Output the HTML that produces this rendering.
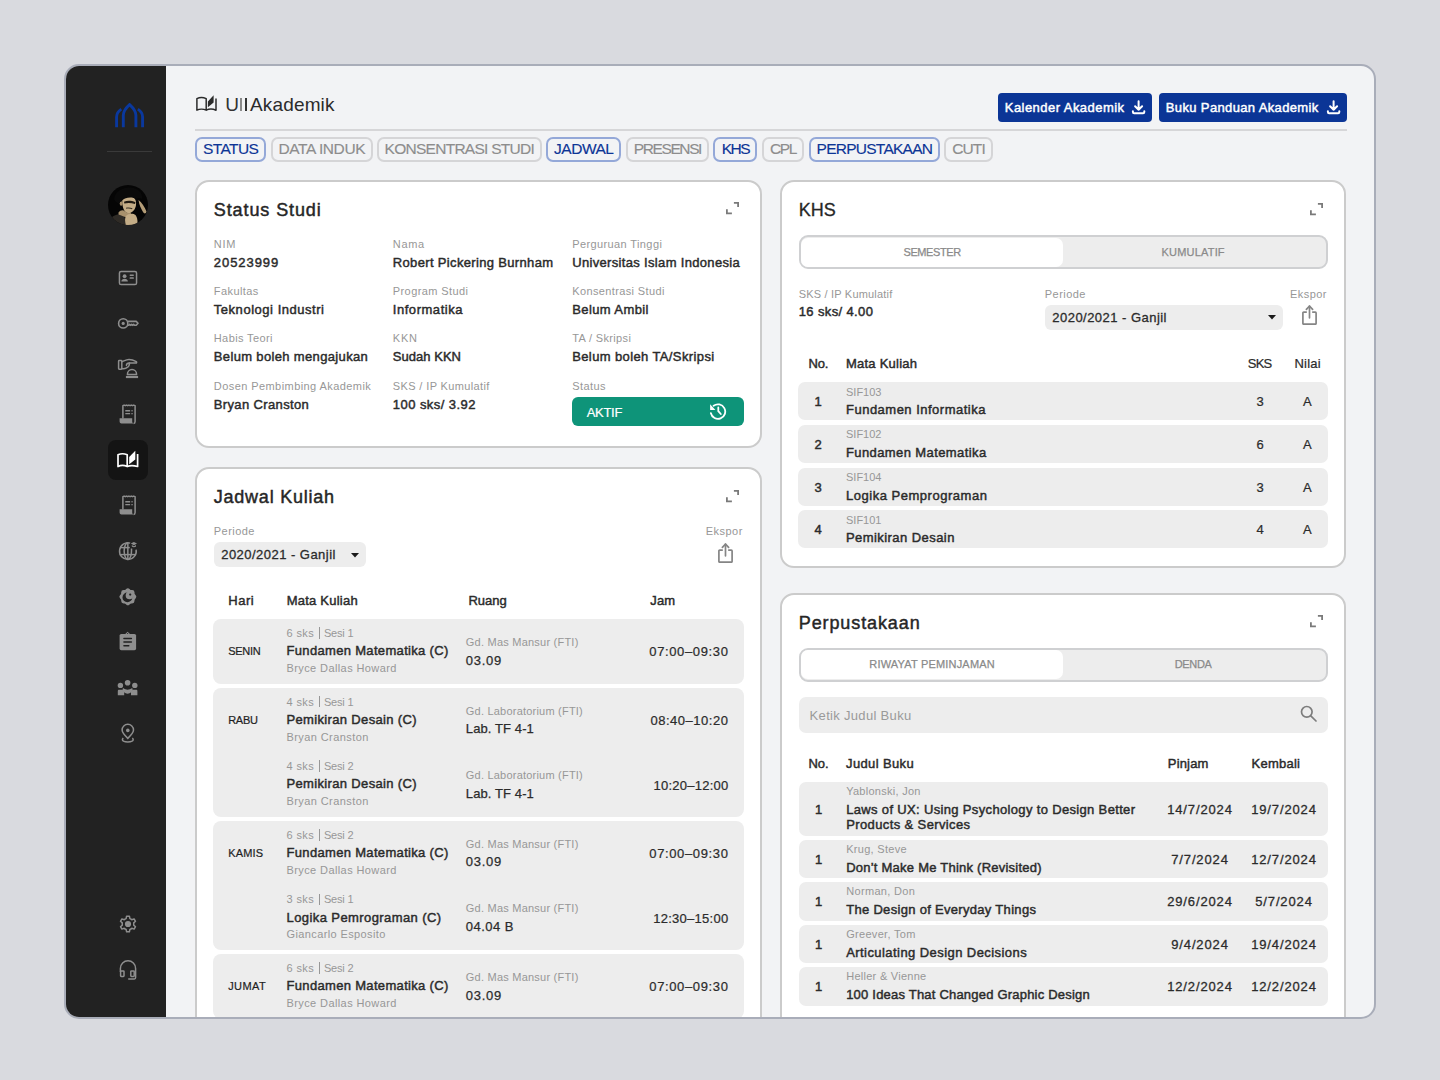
<!DOCTYPE html>
<html><head><meta charset="utf-8"><style>
html,body{margin:0;padding:0;width:1440px;height:1080px;overflow:hidden;background:#d9dadf;}
body{position:relative;font-family:"Liberation Sans", sans-serif;}
.t{position:absolute;white-space:nowrap;}
</style></head><body>
<div style="position:absolute;left:64px;top:64px;width:1308px;height:951px;border:2px solid #a9adb9;border-radius:15px;overflow:hidden;background:#f2f3f5;"><div style="position:absolute;left:0;top:0;width:100px;height:100%;background:#222222;"></div><div id="main" style="position:absolute;left:-66px;top:-66px;width:1440px;height:1080px;">
<svg style="position:absolute;left:115px;top:103.2px;" width="30" height="25" viewBox="0 0 30 25"><g fill="none" stroke="#0a389e" stroke-width="2.9" stroke-linejoin="miter"><path d="M8.3 24.3 V12.3 C8.3 7.5 11.5 4.5 14.6 1.7 C17.7 4.5 20.9 7.5 20.9 12.3 V24.3"/><path d="M1.6 24.3 V14 C1.6 10.5 3.4 8 6.3 6.1"/><path d="M27.6 24.3 V14 C27.6 10.5 25.8 8 22.9 6.1"/></g></svg>
<div style="position:absolute;left:107px;top:150.5px;width:45px;height:1.5px;background:#3a3a3a;"></div>
<svg style="position:absolute;left:108px;top:184.8px;" width="40" height="40" viewBox="0 0 40 40"><defs><clipPath id="av"><circle cx="20" cy="20" r="20"/></clipPath></defs><g clip-path="url(#av)"><rect width="40" height="40" fill="#050505"/><path d="M3 33 C7 29 12 28.5 15 30 C17 32 18 36 18 41 L3 41Z" fill="#2f2b26"/><path d="M10.5 27.5 C12.5 25 15 24.5 17 26.5 C19 28 21 28.5 23 27.5 L22.5 33 C18.5 32.5 14 31 10.5 29.5Z" fill="#a8916d"/><path d="M18 31 C20 28.5 25 28 27.5 30 C29.5 32.5 30 37 29 41 L18 41 C17 36.5 16.5 33.5 18 31Z" fill="#c4ad87"/><path d="M14.5 14 C16 11.5 20 11 24 12 C27.5 13 28.5 16.5 28 20 C27.5 24 25 27.5 21.5 28 C18 28.5 15.5 25.5 14.8 21.5 C14.3 18.5 14 16 14.5 14Z" fill="#c4ad87"/><ellipse cx="13.2" cy="18.5" rx="1.5" ry="2.2" fill="#a38c69"/><path d="M6 14 C7 6 15 2 23 2.5 C30 3 35 8 34 14 C32 13 30 12.5 28.5 14 C26 12.5 21 12 17 13.5 C14.5 14.5 12.5 16.5 11 18.5 C9 18 7 16.5 6 14Z" fill="#0a0a0a"/><path d="M16 16.8 C19 15.5 23 15.5 27.5 17.2 L27 19 C23 17.8 19.5 17.8 16.3 18.6Z" fill="#211b13"/><path d="M18 22.8 C20 22.2 22.5 22.3 24.5 23.2 L24 24.2 C22 23.4 20 23.4 18.2 23.8Z" fill="#3a3125"/><path d="M30.5 15 C33.5 17 36.5 21.5 38.5 26.5 C38 29 36 29 35 27 C33 23.5 31 19.5 30.5 15Z" fill="#b39c77"/></g></svg>
<svg style="position:absolute;left:118px;top:269.5px;" width="20" height="16" viewBox="0 0 20 16"><rect x="1.45" y="1.45" width="17.1" height="13.1" rx="1.6" fill="none" stroke="#8e8e8e" stroke-width="1.5"/><g fill="#8e8e8e"><circle cx="6.6" cy="6.2" r="1.9"/><path d="M3.3 11.6 C3.5 9.6 4.8 8.8 6.6 8.8 C8.4 8.8 9.7 9.6 9.9 11.6Z"/><rect x="11.6" y="4.4" width="4.3" height="1.5" rx="0.6"/><rect x="11.6" y="7.3" width="4.3" height="1.5" rx="0.6"/></g></svg>
<svg style="position:absolute;left:117px;top:317px;" width="22" height="13" viewBox="0 0 22 13"><g fill="none" stroke="#8e8e8e" stroke-width="1.6" stroke-linejoin="round"><circle cx="6.2" cy="6.4" r="4.6"/><path d="M10.6 4.4 H19.2 L21 6.3 L19.2 8.3 H17.6 L16.6 7.3 L15.6 8.3 L14.6 7.3 L13.6 8.3 L12.6 7.3 L11.6 8.3 H10.6"/></g><circle cx="6.2" cy="6.4" r="1.6" fill="#8e8e8e"/></svg>
<svg style="position:absolute;left:117px;top:358px;" width="22" height="22" viewBox="0 0 22 22"><g fill="none" stroke="#8e8e8e" stroke-width="1.5" stroke-linejoin="round" stroke-linecap="round"><rect x="1.6" y="2.6" width="3.2" height="8.6" rx="0.6"/><path d="M4.8 3.8 C6.8 3.2 9 1.4 12 1.4 C14.5 1.4 17.5 2.6 19.3 3.6 C19.9 4 19.7 5.1 18.9 5.1 H12.2 C10.6 5.1 9.5 6 9.4 7.4"/><path d="M12.4 5.1 C12.6 7.4 11.4 9 9.6 9.8 C7.6 10.8 6.2 10.9 4.8 10.5"/><path d="M10.4 16.4 C10.4 13.6 12.4 11.6 15 11.6 C17.6 11.6 19.6 13.6 19.6 16.4Z"/></g><rect x="8.9" y="17.9" width="12.2" height="2.2" fill="#8e8e8e"/></svg>
<svg style="position:absolute;left:118px;top:404.2px;" width="20" height="21" viewBox="0 0 20 21"><g fill="none" stroke="#8e8e8e" stroke-width="1.5" stroke-linejoin="round"><path d="M4.9 14.6 V1.6 L6.1 1.1 L7.3 1.7 L8.5 1.1 L9.7 1.7 L10.9 1.1 L12.1 1.7 L13.3 1.1 L14.5 1.7 L15.7 1.1 L17.1 1.6 V17.6 C17.1 18.7 16.6 19.4 15.6 19.4"/></g><g fill="#8e8e8e"><path d="M1.6 14.2 H14.2 V17.5 C14.2 18.5 14.9 19.5 16 19.5 H3.5 C2.4 19.5 1.6 18.6 1.6 17.5Z"/><rect x="7.2" y="6.1" width="5" height="1.3" rx="0.5"/><rect x="7.2" y="9" width="5" height="1.3" rx="0.5"/><rect x="13.4" y="6.1" width="1.3" height="1.3"/><rect x="13.4" y="9" width="1.3" height="1.3"/></g></svg>
<div style="position:absolute;left:108px;top:440px;width:40px;height:40px;background:#141414;border-radius:8px;"></div>
<svg style="position:absolute;left:117px;top:450px;" width="22" height="18" viewBox="0 0 22 18"><g fill="none" stroke="#ffffff" stroke-width="1.7" stroke-linejoin="round"><path d="M1 16.5 V4.8 C3.5 3.6 7.5 3.6 10.2 4.8 V16.5 C7.5 15.3 3.5 15.3 1 16.5Z"/><path d="M10.2 16.5 C12.9 15.3 16.9 15.3 20.6 16.5 V4"/></g><path d="M12.2 7 L18.3 0.8 V9.6 L12.2 14.2Z" fill="#ffffff"/></svg>
<svg style="position:absolute;left:118px;top:494.5px;" width="20" height="21" viewBox="0 0 20 21"><g fill="none" stroke="#8e8e8e" stroke-width="1.5" stroke-linejoin="round"><path d="M4.9 14.6 V1.6 L6.1 1.1 L7.3 1.7 L8.5 1.1 L9.7 1.7 L10.9 1.1 L12.1 1.7 L13.3 1.1 L14.5 1.7 L15.7 1.1 L17.1 1.6 V17.6 C17.1 18.7 16.6 19.4 15.6 19.4"/></g><g fill="#8e8e8e"><path d="M1.6 14.2 H14.2 V17.5 C14.2 18.5 14.9 19.5 16 19.5 H3.5 C2.4 19.5 1.6 18.6 1.6 17.5Z"/><rect x="7.2" y="6.1" width="5" height="1.3" rx="0.5"/><rect x="7.2" y="9" width="5" height="1.3" rx="0.5"/><rect x="13.4" y="6.1" width="1.3" height="1.3"/><rect x="13.4" y="9" width="1.3" height="1.3"/></g></svg>
<svg style="position:absolute;left:118px;top:541px;" width="20" height="20" viewBox="0 0 20 20"><g fill="none" stroke="#8e8e8e" stroke-width="1.5"><path d="M12.2 2.1 A8.35 8.35 0 1 0 18.1 8.6"/><path d="M9.85 1.75 A3.7 8.35 0 0 0 9.85 18.45 A3.7 8.35 0 0 0 13.5 9.5 V7.5"/><path d="M9.85 1.75 V18.45"/><path d="M2.1 6.6 H11.8"/><path d="M1.6 13.6 H18.1"/></g><g fill="#8e8e8e"><path d="M12.8 2.6 L15.9 0.9 L19 2.6 L15.9 4.3Z"/><path d="M13.8 4.1 V5.5 C14.8 6.4 17 6.4 18 5.5 V4.1 L15.9 5.3Z"/></g></svg>
<svg style="position:absolute;left:118px;top:587px;" width="20" height="20" viewBox="0 0 20 20"><g fill="#8e8e8e"><rect x="3.2" y="3.1" width="13.3" height="13.3" rx="2.4"/><rect x="3.2" y="3.1" width="13.3" height="13.3" rx="2.4" transform="rotate(45 9.85 9.75)"/></g><circle cx="9.4" cy="10.4" r="4.9" fill="#222"/><circle cx="11.5" cy="8.4" r="3.8" fill="#8e8e8e"/><circle cx="12.2" cy="7.6" r="1.1" fill="#222"/></svg>
<svg style="position:absolute;left:119px;top:631px;" width="18" height="20" viewBox="0 0 18 20"><g fill="#8e8e8e"><rect x="0.6" y="2.9" width="16.5" height="16.3" rx="1.7"/><path d="M6 3.2 L8.6 0.8 L11.2 3.2Z"/></g><g fill="#222"><circle cx="8.6" cy="2.5" r="0.6"/><rect x="4.2" y="6.8" width="8.9" height="1.5" rx="0.75"/><rect x="4.2" y="10.3" width="8.9" height="1.5" rx="0.75"/><rect x="4.2" y="14" width="6.3" height="1.5" rx="0.75"/></g></svg>
<svg style="position:absolute;left:117px;top:679px;" width="22" height="18" viewBox="0 0 22 18"><g fill="#8e8e8e"><circle cx="3.4" cy="6.4" r="2.7"/><circle cx="10.6" cy="3.7" r="2.8"/><circle cx="17.8" cy="6.4" r="2.7"/><path d="M0.8 16.2 V12 C0.8 11.3 1.3 10.8 2 10.8 H5.4 L7.2 12.6 V16.2Z"/><path d="M20.4 16.2 V12 C20.4 11.3 19.9 10.8 19.2 10.8 H15.8 L14 12.6 V16.2Z"/><path d="M6 9.1 C7.8 10.4 9.2 10.8 10.6 10.8 C12 10.8 13.4 10.4 15.2 9.1 L15.9 11.5 C13.9 13.9 12.1 14.7 10.6 14.7 C9.1 14.7 7.3 13.9 5.3 11.5Z"/></g></svg>
<svg style="position:absolute;left:118px;top:722px;" width="20" height="22" viewBox="0 0 20 22"><g fill="none" stroke="#8e8e8e" stroke-width="1.5"><path d="M9.8 16.4 C6 12.6 4.1 10.5 4.1 8 A5.7 5.7 0 0 1 15.5 8 C15.5 10.5 13.6 12.6 9.8 16.4Z"/><path d="M5.3 16.2 C4.6 16.7 4.4 17.2 4.4 17.6 C4.4 19.1 7 20 9.8 20 C12.6 20 15.2 19.1 15.2 17.6 C15.2 17.2 15 16.7 14.3 16.2"/></g><circle cx="9.8" cy="8.4" r="1.8" fill="#8e8e8e"/></svg>
<svg style="position:absolute;left:117.8px;top:915.3px;" width="20" height="18" viewBox="0 0 20 18"><g fill="none" stroke="#8e8e8e" stroke-width="1.5" stroke-linejoin="round"><path d="M8.6 1.2 H11.4 L11.9 3.6 C12.6 3.9 13.2 4.2 13.8 4.7 L16.1 3.9 L17.5 6.3 L15.7 7.9 C15.8 8.6 15.8 9.4 15.7 10.1 L17.5 11.7 L16.1 14.1 L13.8 13.3 C13.2 13.8 12.6 14.1 11.9 14.4 L11.4 16.8 H8.6 L8.1 14.4 C7.4 14.1 6.8 13.8 6.2 13.3 L3.9 14.1 L2.5 11.7 L4.3 10.1 C4.2 9.4 4.2 8.6 4.3 7.9 L2.5 6.3 L3.9 3.9 L6.2 4.7 C6.8 4.2 7.4 3.9 8.1 3.6Z"/></g><circle cx="10" cy="9" r="3.1" fill="#8e8e8e"/></svg>
<svg style="position:absolute;left:118px;top:959px;" width="20" height="22" viewBox="0 0 20 22"><g fill="none" stroke="#8e8e8e" stroke-width="1.5" stroke-linejoin="round"><path d="M2.4 13 V9.4 A7.6 7.6 0 0 1 17.6 9.4 V18.6 C17.6 19.4 17.2 19.9 16.4 19.9 H10.2"/><rect x="2.6" y="11.9" width="3.4" height="5.6" rx="0.7"/><rect x="12.8" y="11.9" width="3.4" height="5.6" rx="0.7"/></g></svg>
<svg style="position:absolute;left:195.5px;top:93.5px;" width="21" height="18" viewBox="0 0 21 18"><g fill="none" stroke="#2b2b2b" stroke-width="1.5" stroke-linejoin="round"><path d="M0.9 16.2 V4.6 C3.3 3.3 7.6 3.3 10.2 4.6 V16.2 C7.6 14.8 3.3 14.8 0.9 16.2Z"/><path d="M10.2 16.2 C12.8 14.8 17.1 14.8 20 16.2 V4.5"/></g><path d="M11.9 7.4 L17.6 1.2 V8.6 L11.9 13.3Z" fill="#2b2b2b"/></svg>
<div class="t" style="left:225.2px;top:95.22px;font-size:19px;line-height:19px;font-weight:400;color:#333;">U</div>
<div style="position:absolute;left:240.1px;top:97.6px;width:1.6px;height:13.7px;background:#8a8a8a"></div>
<div style="position:absolute;left:244.9px;top:97.6px;width:1.7px;height:13.7px;background:#333"></div>
<div class="t" style="left:250px;top:95.22px;font-size:19px;line-height:19px;font-weight:400;color:#2b2b2b;letter-spacing:0.154px;">Akademik</div>
<div style="position:absolute;left:998px;top:93px;width:154px;height:29px;background:#0b3596;border-radius:4px;"></div>
<div class="t" style="left:1004.8px;top:101.20px;font-size:13px;line-height:13px;font-weight:400;-webkit-text-stroke:0.45px #fff;color:#fff;letter-spacing:0.449px;">Kalender Akademik</div>
<svg style="position:absolute;left:1131.1px;top:100.4px;" width="15" height="15" viewBox="0 0 15 15"><g fill="none" stroke="#fff" stroke-width="2" stroke-linecap="round" stroke-linejoin="round"><path d="M7.6 1.2 V9.8 M4.1 6.3 L7.6 9.8 L11.1 6.3"/><path d="M1.9 11.3 V12 Q1.9 13.2 3.1 13.2 H12.1 Q13.3 13.2 13.3 12 V11.3"/></g></svg>
<div style="position:absolute;left:1159px;top:93px;width:188px;height:29px;background:#0b3596;border-radius:4px;"></div>
<div class="t" style="left:1165.8px;top:101.20px;font-size:13px;line-height:13px;font-weight:400;-webkit-text-stroke:0.45px #fff;color:#fff;letter-spacing:0.361px;">Buku Panduan Akademik</div>
<svg style="position:absolute;left:1326.4px;top:100.4px;" width="15" height="15" viewBox="0 0 15 15"><g fill="none" stroke="#fff" stroke-width="2" stroke-linecap="round" stroke-linejoin="round"><path d="M7.6 1.2 V9.8 M4.1 6.3 L7.6 9.8 L11.1 6.3"/><path d="M1.9 11.3 V12 Q1.9 13.2 3.1 13.2 H12.1 Q13.3 13.2 13.3 12 V11.3"/></g></svg>
<div style="position:absolute;left:195px;top:129px;width:1152px;height:1.5px;background:#d6d6d8;"></div>
<div style="position:absolute;left:195.2px;top:137px;width:66.6px;height:20.8px;border:2px solid #94a8d8;border-radius:7px;"></div>
<div class="t" style="left:230.65px;transform:translateX(-50%);top:141.18px;font-size:15.5px;line-height:15.5px;font-weight:400;-webkit-text-stroke:0.15px #0d3596;color:#0d3596;letter-spacing:-0.612px;">STATUS</div>
<div style="position:absolute;left:270.7px;top:137px;width:97.9px;height:20.8px;border:2px solid #d5d5d7;border-radius:7px;"></div>
<div class="t" style="left:321.8px;transform:translateX(-50%);top:141.18px;font-size:15.5px;line-height:15.5px;font-weight:400;-webkit-text-stroke:0.15px #8d8d8d;color:#8d8d8d;letter-spacing:-0.402px;">DATA INDUK</div>
<div style="position:absolute;left:376.7px;top:137px;width:161.0px;height:20.8px;border:2px solid #d5d5d7;border-radius:7px;"></div>
<div class="t" style="left:459.35px;transform:translateX(-50%);top:141.18px;font-size:15.5px;line-height:15.5px;font-weight:400;-webkit-text-stroke:0.15px #8d8d8d;color:#8d8d8d;letter-spacing:-0.733px;">KONSENTRASI STUDI</div>
<div style="position:absolute;left:546.3px;top:137px;width:70.7px;height:20.8px;border:2px solid #94a8d8;border-radius:7px;"></div>
<div class="t" style="left:583.8px;transform:translateX(-50%);top:141.18px;font-size:15.5px;line-height:15.5px;font-weight:400;-webkit-text-stroke:0.15px #0d3596;color:#0d3596;letter-spacing:-0.479px;">JADWAL</div>
<div style="position:absolute;left:625.5px;top:137px;width:79.5px;height:20.8px;border:2px solid #d5d5d7;border-radius:7px;"></div>
<div class="t" style="left:667.4px;transform:translateX(-50%);top:141.18px;font-size:15.5px;line-height:15.5px;font-weight:400;-webkit-text-stroke:0.15px #8d8d8d;color:#8d8d8d;letter-spacing:-1.384px;">PRESENSI</div>
<div style="position:absolute;left:713.4px;top:137px;width:39.6px;height:20.8px;border:2px solid #94a8d8;border-radius:7px;"></div>
<div class="t" style="left:735.35px;transform:translateX(-50%);top:141.18px;font-size:15.5px;line-height:15.5px;font-weight:400;-webkit-text-stroke:0.15px #0d3596;color:#0d3596;letter-spacing:-1.538px;">KHS</div>
<div style="position:absolute;left:761.7px;top:137px;width:38.3px;height:20.8px;border:2px solid #d5d5d7;border-radius:7px;"></div>
<div class="t" style="left:783.0px;transform:translateX(-50%);top:141.18px;font-size:15.5px;line-height:15.5px;font-weight:400;-webkit-text-stroke:0.15px #8d8d8d;color:#8d8d8d;letter-spacing:-1.328px;">CPL</div>
<div style="position:absolute;left:808.7px;top:137px;width:127.1px;height:20.8px;border:2px solid #94a8d8;border-radius:7px;"></div>
<div class="t" style="left:874.4px;transform:translateX(-50%);top:141.18px;font-size:15.5px;line-height:15.5px;font-weight:400;-webkit-text-stroke:0.15px #0d3596;color:#0d3596;letter-spacing:-0.755px;">PERPUSTAKAAN</div>
<div style="position:absolute;left:944.2px;top:137px;width:44.4px;height:20.8px;border:2px solid #d5d5d7;border-radius:7px;"></div>
<div class="t" style="left:968.55px;transform:translateX(-50%);top:141.18px;font-size:15.5px;line-height:15.5px;font-weight:400;-webkit-text-stroke:0.15px #8d8d8d;color:#8d8d8d;letter-spacing:-0.857px;">CUTI</div>
<div style="position:absolute;left:195px;top:180px;width:563px;height:264px;border:2px solid #cbcbcb;border-radius:14px;background:#ffffff;"></div>
<div class="t" style="left:213.8px;top:201.06px;font-size:18px;line-height:18px;font-weight:400;-webkit-text-stroke:0.45px #262626;color:#262626;letter-spacing:0.903px;">Status Studi</div>
<svg style="position:absolute;left:726px;top:202px;" width="13" height="13" viewBox="0 0 13 13"><g fill="none" stroke="#7a7a7a" stroke-width="1.8"><path d="M7.9 0.9 H12.1 V5.1"/><path d="M0.9 7.2 V11.4 H5.9"/></g></svg>
<div class="t" style="left:213.8px;top:238.59px;font-size:11px;line-height:11px;font-weight:400;color:#979797;letter-spacing:0.706px;">NIM</div>
<div class="t" style="left:213.8px;top:255.80px;font-size:13px;line-height:13px;font-weight:400;-webkit-text-stroke:0.45px #2b2b2b;color:#2b2b2b;letter-spacing:0.937px;">20523999</div>
<div class="t" style="left:392.8px;top:238.59px;font-size:11px;line-height:11px;font-weight:400;color:#979797;letter-spacing:0.685px;">Nama</div>
<div class="t" style="left:392.8px;top:255.80px;font-size:13px;line-height:13px;font-weight:400;-webkit-text-stroke:0.45px #2b2b2b;color:#2b2b2b;letter-spacing:0.340px;">Robert Pickering Burnham</div>
<div class="t" style="left:572.2px;top:238.59px;font-size:11px;line-height:11px;font-weight:400;color:#979797;letter-spacing:0.391px;">Perguruan Tinggi</div>
<div class="t" style="left:572.2px;top:255.80px;font-size:13px;line-height:13px;font-weight:400;-webkit-text-stroke:0.45px #2b2b2b;color:#2b2b2b;letter-spacing:0.332px;">Universitas Islam Indonesia</div>
<div class="t" style="left:213.8px;top:285.89px;font-size:11px;line-height:11px;font-weight:400;color:#979797;letter-spacing:0.416px;">Fakultas</div>
<div class="t" style="left:213.8px;top:302.90px;font-size:13px;line-height:13px;font-weight:400;-webkit-text-stroke:0.45px #2b2b2b;color:#2b2b2b;letter-spacing:0.531px;">Teknologi Industri</div>
<div class="t" style="left:392.8px;top:285.89px;font-size:11px;line-height:11px;font-weight:400;color:#979797;letter-spacing:0.410px;">Program Studi</div>
<div class="t" style="left:392.8px;top:302.90px;font-size:13px;line-height:13px;font-weight:400;-webkit-text-stroke:0.45px #2b2b2b;color:#2b2b2b;letter-spacing:0.539px;">Informatika</div>
<div class="t" style="left:572.2px;top:285.89px;font-size:11px;line-height:11px;font-weight:400;color:#979797;letter-spacing:0.377px;">Konsentrasi Studi</div>
<div class="t" style="left:572.2px;top:302.90px;font-size:13px;line-height:13px;font-weight:400;-webkit-text-stroke:0.45px #2b2b2b;color:#2b2b2b;letter-spacing:0.405px;">Belum Ambil</div>
<div class="t" style="left:213.8px;top:333.44px;font-size:11px;line-height:11px;font-weight:400;color:#979797;letter-spacing:0.384px;">Habis Teori</div>
<div class="t" style="left:213.8px;top:350.30px;font-size:13px;line-height:13px;font-weight:400;-webkit-text-stroke:0.45px #2b2b2b;color:#2b2b2b;letter-spacing:0.347px;">Belum boleh mengajukan</div>
<div class="t" style="left:392.8px;top:333.44px;font-size:11px;line-height:11px;font-weight:400;color:#979797;letter-spacing:0.792px;">KKN</div>
<div class="t" style="left:392.8px;top:350.30px;font-size:13px;line-height:13px;font-weight:400;-webkit-text-stroke:0.45px #2b2b2b;color:#2b2b2b;letter-spacing:0.033px;">Sudah KKN</div>
<div class="t" style="left:572.2px;top:333.44px;font-size:11px;line-height:11px;font-weight:400;color:#979797;letter-spacing:0.349px;">TA / Skripsi</div>
<div class="t" style="left:572.2px;top:350.30px;font-size:13px;line-height:13px;font-weight:400;-webkit-text-stroke:0.45px #2b2b2b;color:#2b2b2b;letter-spacing:0.385px;">Belum boleh TA/Skripsi</div>
<div class="t" style="left:213.8px;top:380.99px;font-size:11px;line-height:11px;font-weight:400;color:#979797;letter-spacing:0.428px;">Dosen Pembimbing Akademik</div>
<div class="t" style="left:213.8px;top:397.60px;font-size:13px;line-height:13px;font-weight:400;-webkit-text-stroke:0.45px #2b2b2b;color:#2b2b2b;letter-spacing:0.359px;">Bryan Cranston</div>
<div class="t" style="left:392.8px;top:380.99px;font-size:11px;line-height:11px;font-weight:400;color:#979797;letter-spacing:0.372px;">SKS / IP Kumulatif</div>
<div class="t" style="left:392.8px;top:397.60px;font-size:13px;line-height:13px;font-weight:400;-webkit-text-stroke:0.45px #2b2b2b;color:#2b2b2b;letter-spacing:0.448px;">100 sks/ 3.92</div>
<div class="t" style="left:572.2px;top:380.99px;font-size:11px;line-height:11px;font-weight:400;color:#979797;letter-spacing:0.437px;">Status</div>
<div style="position:absolute;left:572px;top:397px;width:171.5px;height:28.7px;background:#0e9479;border-radius:6px;"></div>
<div class="t" style="left:586.7px;top:405.70px;font-size:13px;line-height:13px;font-weight:400;-webkit-text-stroke:0.2px #ffffff;color:#ffffff;letter-spacing:-0.286px;">AKTIF</div>
<svg style="position:absolute;left:709px;top:403px;" width="18" height="18" viewBox="0 0 18 18"><g fill="none" stroke="#fff" stroke-width="1.8" stroke-linecap="round"><path d="M4.6 2.8 A7.25 7.25 0 1 1 1.9 10.2"/><path d="M9.3 4.4 V8.1 L11.8 11"/></g><path d="M1.1 1.3 V6.9 H6.4Z" fill="#fff"/></svg>
<div style="position:absolute;left:195px;top:467px;width:563px;height:629px;border:2px solid #cbcbcb;border-radius:14px;background:#ffffff;"></div>
<div class="t" style="left:213.8px;top:487.66px;font-size:18px;line-height:18px;font-weight:400;-webkit-text-stroke:0.45px #262626;color:#262626;letter-spacing:0.760px;">Jadwal Kuliah</div>
<svg style="position:absolute;left:726px;top:489.8px;" width="13" height="13" viewBox="0 0 13 13"><g fill="none" stroke="#7a7a7a" stroke-width="1.8"><path d="M7.9 0.9 H12.1 V5.1"/><path d="M0.9 7.2 V11.4 H5.9"/></g></svg>
<div class="t" style="left:213.8px;top:525.79px;font-size:11px;line-height:11px;font-weight:400;color:#979797;letter-spacing:0.442px;">Periode</div>
<div style="position:absolute;left:213.6px;top:542px;width:152px;height:24.7px;background:#ededed;border-radius:6px;"></div>
<div class="t" style="left:221.2px;top:548.30px;font-size:13px;line-height:13px;font-weight:400;-webkit-text-stroke:0.3px #2b2b2b;color:#2b2b2b;letter-spacing:0.468px;">2020/2021 - Ganjil</div>
<svg style="position:absolute;left:350.8px;top:552.5px;" width="8" height="5" viewBox="0 0 8 5"><path d="M0 0 H8 L4 4.6Z" fill="#1a1a1a"/></svg>
<div class="t" style="right:697.2px;top:525.79px;font-size:11px;line-height:11px;font-weight:400;color:#979797;letter-spacing:0.480px;">Ekspor</div>
<svg style="position:absolute;left:717.5px;top:543px;" width="15" height="20" viewBox="0 0 15 20"><g fill="none" stroke="#858585" stroke-width="1.7" stroke-linejoin="round" stroke-linecap="round"><path d="M7.5 1.2 V12.8"/><path d="M4.4 4.3 L7.5 1.2 L10.6 4.3"/><path d="M4.2 7.1 H1.7 Q0.9 7.1 0.9 7.9 V18.4 Q0.9 19.2 1.7 19.2 H13.3 Q14.1 19.2 14.1 18.4 V7.9 Q14.1 7.1 13.3 7.1 H10.8"/></g></svg>
<div class="t" style="left:228.3px;top:593.60px;font-size:13px;line-height:13px;font-weight:400;-webkit-text-stroke:0.45px #2b2b2b;color:#2b2b2b;letter-spacing:0.484px;">Hari</div>
<div class="t" style="left:286.7px;top:593.60px;font-size:13px;line-height:13px;font-weight:400;-webkit-text-stroke:0.45px #2b2b2b;color:#2b2b2b;letter-spacing:0.234px;">Mata Kuliah</div>
<div class="t" style="left:468.4px;top:593.60px;font-size:13px;line-height:13px;font-weight:400;-webkit-text-stroke:0.45px #2b2b2b;color:#2b2b2b;letter-spacing:-0.003px;">Ruang</div>
<div class="t" style="left:650.2px;top:593.60px;font-size:13px;line-height:13px;font-weight:400;-webkit-text-stroke:0.45px #2b2b2b;color:#2b2b2b;letter-spacing:0.219px;">Jam</div>
<div style="position:absolute;left:213.3px;top:619.1px;width:530.4px;height:64.45px;background:#ededed;border-radius:8px;"></div>
<div class="t" style="left:228.2px;top:646.01px;font-size:11px;line-height:11px;font-weight:400;-webkit-text-stroke:0.2px #1f1f1f;color:#1f1f1f;letter-spacing:-0.281px;">SENIN</div>
<div class="t" style="left:286.5px;top:628.09px;font-size:11px;line-height:11px;font-weight:400;color:#979797;letter-spacing:0.378px;">6 sks</div>
<div style="position:absolute;left:318.6px;top:627.1px;width:1.2px;height:11.6px;background:#979797;"></div>
<div class="t" style="left:323.9px;top:628.09px;font-size:11px;line-height:11px;font-weight:400;color:#979797;letter-spacing:-0.176px;">Sesi 1</div>
<div class="t" style="left:286.5px;top:644.10px;font-size:13px;line-height:13px;font-weight:400;-webkit-text-stroke:0.45px #2b2b2b;color:#2b2b2b;letter-spacing:0.327px;">Fundamen Matematika (C)</div>
<div class="t" style="left:286.5px;top:662.99px;font-size:11px;line-height:11px;font-weight:400;color:#979797;letter-spacing:0.399px;">Bryce Dallas Howard</div>
<div class="t" style="left:465.8px;top:636.89px;font-size:11px;line-height:11px;font-weight:400;color:#979797;letter-spacing:0.228px;">Gd. Mas Mansur (FTI)</div>
<div class="t" style="left:465.8px;top:653.50px;font-size:13px;line-height:13px;font-weight:400;-webkit-text-stroke:0.25px #2b2b2b;color:#2b2b2b;letter-spacing:0.738px;">03.09</div>
<div class="t" style="right:711.5px;top:645.30px;font-size:13px;line-height:13px;font-weight:400;-webkit-text-stroke:0.22px #2b2b2b;color:#2b2b2b;letter-spacing:0.630px;">07:00–09:30</div>
<div style="position:absolute;left:213.3px;top:687.85px;width:530.4px;height:128.9px;background:#ededed;border-radius:8px;"></div>
<div class="t" style="left:228.2px;top:714.76px;font-size:11px;line-height:11px;font-weight:400;-webkit-text-stroke:0.2px #1f1f1f;color:#1f1f1f;letter-spacing:-0.288px;">RABU</div>
<div class="t" style="left:286.5px;top:696.84px;font-size:11px;line-height:11px;font-weight:400;color:#979797;letter-spacing:0.378px;">4 sks</div>
<div style="position:absolute;left:318.6px;top:695.85px;width:1.2px;height:11.6px;background:#979797;"></div>
<div class="t" style="left:323.9px;top:696.84px;font-size:11px;line-height:11px;font-weight:400;color:#979797;letter-spacing:-0.176px;">Sesi 1</div>
<div class="t" style="left:286.5px;top:712.85px;font-size:13px;line-height:13px;font-weight:400;-webkit-text-stroke:0.45px #2b2b2b;color:#2b2b2b;letter-spacing:0.342px;">Pemikiran Desain (C)</div>
<div class="t" style="left:286.5px;top:731.74px;font-size:11px;line-height:11px;font-weight:400;color:#979797;letter-spacing:0.412px;">Bryan Cranston</div>
<div class="t" style="left:465.8px;top:705.64px;font-size:11px;line-height:11px;font-weight:400;color:#979797;letter-spacing:0.214px;">Gd. Laboratorium (FTI)</div>
<div class="t" style="left:465.8px;top:722.25px;font-size:13px;line-height:13px;font-weight:400;-webkit-text-stroke:0.25px #2b2b2b;color:#2b2b2b;letter-spacing:0.103px;">Lab. TF 4-1</div>
<div class="t" style="right:711.5px;top:714.05px;font-size:13px;line-height:13px;font-weight:400;-webkit-text-stroke:0.22px #2b2b2b;color:#2b2b2b;letter-spacing:0.520px;">08:40–10:20</div>
<div class="t" style="left:286.5px;top:761.29px;font-size:11px;line-height:11px;font-weight:400;color:#979797;letter-spacing:0.378px;">4 sks</div>
<div style="position:absolute;left:318.6px;top:760.3px;width:1.2px;height:11.6px;background:#979797;"></div>
<div class="t" style="left:323.9px;top:761.29px;font-size:11px;line-height:11px;font-weight:400;color:#979797;letter-spacing:-0.176px;">Sesi 2</div>
<div class="t" style="left:286.5px;top:777.30px;font-size:13px;line-height:13px;font-weight:400;-webkit-text-stroke:0.45px #2b2b2b;color:#2b2b2b;letter-spacing:0.342px;">Pemikiran Desain (C)</div>
<div class="t" style="left:286.5px;top:796.19px;font-size:11px;line-height:11px;font-weight:400;color:#979797;letter-spacing:0.412px;">Bryan Cranston</div>
<div class="t" style="left:465.8px;top:770.09px;font-size:11px;line-height:11px;font-weight:400;color:#979797;letter-spacing:0.214px;">Gd. Laboratorium (FTI)</div>
<div class="t" style="left:465.8px;top:786.70px;font-size:13px;line-height:13px;font-weight:400;-webkit-text-stroke:0.25px #2b2b2b;color:#2b2b2b;letter-spacing:0.103px;">Lab. TF 4-1</div>
<div class="t" style="right:711.5px;top:778.50px;font-size:13px;line-height:13px;font-weight:400;-webkit-text-stroke:0.22px #2b2b2b;color:#2b2b2b;letter-spacing:0.240px;">10:20–12:00</div>
<div style="position:absolute;left:213.3px;top:821.05px;width:530.4px;height:128.9px;background:#ededed;border-radius:8px;"></div>
<div class="t" style="left:228.2px;top:847.96px;font-size:11px;line-height:11px;font-weight:400;-webkit-text-stroke:0.2px #1f1f1f;color:#1f1f1f;letter-spacing:0.191px;">KAMIS</div>
<div class="t" style="left:286.5px;top:830.04px;font-size:11px;line-height:11px;font-weight:400;color:#979797;letter-spacing:0.378px;">6 sks</div>
<div style="position:absolute;left:318.6px;top:829.05px;width:1.2px;height:11.6px;background:#979797;"></div>
<div class="t" style="left:323.9px;top:830.04px;font-size:11px;line-height:11px;font-weight:400;color:#979797;letter-spacing:-0.176px;">Sesi 2</div>
<div class="t" style="left:286.5px;top:846.05px;font-size:13px;line-height:13px;font-weight:400;-webkit-text-stroke:0.45px #2b2b2b;color:#2b2b2b;letter-spacing:0.327px;">Fundamen Matematika (C)</div>
<div class="t" style="left:286.5px;top:864.94px;font-size:11px;line-height:11px;font-weight:400;color:#979797;letter-spacing:0.399px;">Bryce Dallas Howard</div>
<div class="t" style="left:465.8px;top:838.84px;font-size:11px;line-height:11px;font-weight:400;color:#979797;letter-spacing:0.228px;">Gd. Mas Mansur (FTI)</div>
<div class="t" style="left:465.8px;top:855.45px;font-size:13px;line-height:13px;font-weight:400;-webkit-text-stroke:0.25px #2b2b2b;color:#2b2b2b;letter-spacing:0.738px;">03.09</div>
<div class="t" style="right:711.5px;top:847.25px;font-size:13px;line-height:13px;font-weight:400;-webkit-text-stroke:0.22px #2b2b2b;color:#2b2b2b;letter-spacing:0.630px;">07:00–09:30</div>
<div class="t" style="left:286.5px;top:894.49px;font-size:11px;line-height:11px;font-weight:400;color:#979797;letter-spacing:0.378px;">3 sks</div>
<div style="position:absolute;left:318.6px;top:893.5px;width:1.2px;height:11.6px;background:#979797;"></div>
<div class="t" style="left:323.9px;top:894.49px;font-size:11px;line-height:11px;font-weight:400;color:#979797;letter-spacing:-0.176px;">Sesi 1</div>
<div class="t" style="left:286.5px;top:910.50px;font-size:13px;line-height:13px;font-weight:400;-webkit-text-stroke:0.45px #2b2b2b;color:#2b2b2b;letter-spacing:0.411px;">Logika Pemrograman (C)</div>
<div class="t" style="left:286.5px;top:929.39px;font-size:11px;line-height:11px;font-weight:400;color:#979797;letter-spacing:0.380px;">Giancarlo Esposito</div>
<div class="t" style="left:465.8px;top:903.29px;font-size:11px;line-height:11px;font-weight:400;color:#979797;letter-spacing:0.228px;">Gd. Mas Mansur (FTI)</div>
<div class="t" style="left:465.8px;top:919.90px;font-size:13px;line-height:13px;font-weight:400;-webkit-text-stroke:0.25px #2b2b2b;color:#2b2b2b;letter-spacing:0.479px;">04.04 B</div>
<div class="t" style="right:711.5px;top:911.70px;font-size:13px;line-height:13px;font-weight:400;-webkit-text-stroke:0.22px #2b2b2b;color:#2b2b2b;letter-spacing:0.270px;">12:30–15:00</div>
<div style="position:absolute;left:213.3px;top:954.25px;width:530.4px;height:64.45px;background:#ededed;border-radius:8px;"></div>
<div class="t" style="left:228.2px;top:981.16px;font-size:11px;line-height:11px;font-weight:400;-webkit-text-stroke:0.2px #1f1f1f;color:#1f1f1f;letter-spacing:0.410px;">JUMAT</div>
<div class="t" style="left:286.5px;top:963.24px;font-size:11px;line-height:11px;font-weight:400;color:#979797;letter-spacing:0.378px;">6 sks</div>
<div style="position:absolute;left:318.6px;top:962.25px;width:1.2px;height:11.6px;background:#979797;"></div>
<div class="t" style="left:323.9px;top:963.24px;font-size:11px;line-height:11px;font-weight:400;color:#979797;letter-spacing:-0.176px;">Sesi 2</div>
<div class="t" style="left:286.5px;top:979.25px;font-size:13px;line-height:13px;font-weight:400;-webkit-text-stroke:0.45px #2b2b2b;color:#2b2b2b;letter-spacing:0.327px;">Fundamen Matematika (C)</div>
<div class="t" style="left:286.5px;top:998.14px;font-size:11px;line-height:11px;font-weight:400;color:#979797;letter-spacing:0.399px;">Bryce Dallas Howard</div>
<div class="t" style="left:465.8px;top:972.04px;font-size:11px;line-height:11px;font-weight:400;color:#979797;letter-spacing:0.228px;">Gd. Mas Mansur (FTI)</div>
<div class="t" style="left:465.8px;top:988.65px;font-size:13px;line-height:13px;font-weight:400;-webkit-text-stroke:0.25px #2b2b2b;color:#2b2b2b;letter-spacing:0.738px;">03.09</div>
<div class="t" style="right:711.5px;top:980.45px;font-size:13px;line-height:13px;font-weight:400;-webkit-text-stroke:0.22px #2b2b2b;color:#2b2b2b;letter-spacing:0.630px;">07:00–09:30</div>
<div style="position:absolute;left:780px;top:180px;width:562px;height:384px;border:2px solid #cbcbcb;border-radius:14px;background:#ffffff;"></div>
<div class="t" style="left:798.75px;top:200.76px;font-size:18px;line-height:18px;font-weight:400;-webkit-text-stroke:0.3px #262626;color:#262626;letter-spacing:-0.058px;">KHS</div>
<svg style="position:absolute;left:1310px;top:202.5px;" width="13" height="13" viewBox="0 0 13 13"><g fill="none" stroke="#7a7a7a" stroke-width="1.8"><path d="M7.9 0.9 H12.1 V5.1"/><path d="M0.9 7.2 V11.4 H5.9"/></g></svg>
<div style="position:absolute;left:798.5px;top:235px;width:525.0px;height:30px;border:2px solid #cfd0d2;border-radius:9px;background:#ededed;"></div>
<div style="position:absolute;left:801px;top:237.5px;width:261.5px;height:29px;border-radius:7px;background:#ffffff;"></div>
<div class="t" style="left:932.1px;transform:translateX(-50%);top:246.89px;font-size:11px;line-height:11px;font-weight:400;-webkit-text-stroke:0.25px #8a8a8a;color:#8a8a8a;letter-spacing:-0.402px;">SEMESTER</div>
<div class="t" style="left:1193.2px;transform:translateX(-50%);top:246.89px;font-size:11px;line-height:11px;font-weight:400;-webkit-text-stroke:0.25px #8a8a8a;color:#8a8a8a;letter-spacing:0.184px;">KUMULATIF</div>
<div class="t" style="left:798.75px;top:288.59px;font-size:11px;line-height:11px;font-weight:400;color:#979797;letter-spacing:0.188px;">SKS / IP Kumulatif</div>
<div class="t" style="left:798.75px;top:305.25px;font-size:13px;line-height:13px;font-weight:400;-webkit-text-stroke:0.45px #2b2b2b;color:#2b2b2b;letter-spacing:0.372px;">16 sks/ 4.00</div>
<div class="t" style="left:1044.8px;top:288.59px;font-size:11px;line-height:11px;font-weight:400;color:#979797;letter-spacing:0.442px;">Periode</div>
<div style="position:absolute;left:1044.6px;top:304.6px;width:238.4px;height:25px;background:#ededed;border-radius:6px;"></div>
<div class="t" style="left:1052.3px;top:310.90px;font-size:13px;line-height:13px;font-weight:400;-webkit-text-stroke:0.3px #2b2b2b;color:#2b2b2b;letter-spacing:0.468px;">2020/2021 - Ganjil</div>
<svg style="position:absolute;left:1268.4px;top:314.5px;" width="8" height="5" viewBox="0 0 8 5"><path d="M0 0 H8 L4 4.6Z" fill="#1a1a1a"/></svg>
<div class="t" style="right:113px;top:288.59px;font-size:11px;line-height:11px;font-weight:400;color:#979797;letter-spacing:0.480px;">Ekspor</div>
<svg style="position:absolute;left:1301.6px;top:304.6px;" width="15" height="20" viewBox="0 0 15 20"><g fill="none" stroke="#858585" stroke-width="1.7" stroke-linejoin="round" stroke-linecap="round"><path d="M7.5 1.2 V12.8"/><path d="M4.4 4.3 L7.5 1.2 L10.6 4.3"/><path d="M4.2 7.1 H1.7 Q0.9 7.1 0.9 7.9 V18.4 Q0.9 19.2 1.7 19.2 H13.3 Q14.1 19.2 14.1 18.4 V7.9 Q14.1 7.1 13.3 7.1 H10.8"/></g></svg>
<div class="t" style="left:808.4px;top:357.40px;font-size:13px;line-height:13px;font-weight:400;-webkit-text-stroke:0.45px #2b2b2b;color:#2b2b2b;letter-spacing:-0.117px;">No.</div>
<div class="t" style="left:846px;top:357.40px;font-size:13px;line-height:13px;font-weight:400;-webkit-text-stroke:0.45px #2b2b2b;color:#2b2b2b;letter-spacing:0.234px;">Mata Kuliah</div>
<div class="t" style="left:1247.8px;top:357.40px;font-size:13px;line-height:13px;font-weight:400;-webkit-text-stroke:0.22px #2b2b2b;color:#2b2b2b;letter-spacing:-0.808px;">SKS</div>
<div class="t" style="left:1294.4px;top:357.40px;font-size:13px;line-height:13px;font-weight:400;-webkit-text-stroke:0.22px #2b2b2b;color:#2b2b2b;letter-spacing:0.251px;">Nilai</div>
<div style="position:absolute;left:798.4px;top:382.2px;width:529.4px;height:38.3px;background:#ededed;border-radius:7px;"></div>
<div class="t" style="left:818.2px;transform:translateX(-50%);top:395.20px;font-size:13px;line-height:13px;font-weight:400;-webkit-text-stroke:0.45px #2b2b2b;color:#2b2b2b;">1</div>
<div class="t" style="left:846px;top:386.69px;font-size:11px;line-height:11px;font-weight:400;color:#979797;">SIF103</div>
<div class="t" style="left:846px;top:403.40px;font-size:13px;line-height:13px;font-weight:400;-webkit-text-stroke:0.45px #2b2b2b;color:#2b2b2b;letter-spacing:0.492px;">Fundamen Informatika</div>
<div class="t" style="left:1260px;transform:translateX(-50%);top:395.20px;font-size:13px;line-height:13px;font-weight:400;-webkit-text-stroke:0.22px #2b2b2b;color:#2b2b2b;">3</div>
<div class="t" style="left:1307.8px;transform:translateX(-50%);top:395.20px;font-size:13px;line-height:13px;font-weight:400;-webkit-text-stroke:0.22px #2b2b2b;color:#2b2b2b;letter-spacing:0.719px;">A</div>
<div style="position:absolute;left:798.4px;top:424.85px;width:529.4px;height:38.3px;background:#ededed;border-radius:7px;"></div>
<div class="t" style="left:818.2px;transform:translateX(-50%);top:437.85px;font-size:13px;line-height:13px;font-weight:400;-webkit-text-stroke:0.45px #2b2b2b;color:#2b2b2b;">2</div>
<div class="t" style="left:846px;top:429.34px;font-size:11px;line-height:11px;font-weight:400;color:#979797;">SIF102</div>
<div class="t" style="left:846px;top:446.05px;font-size:13px;line-height:13px;font-weight:400;-webkit-text-stroke:0.45px #2b2b2b;color:#2b2b2b;letter-spacing:0.400px;">Fundamen Matematika</div>
<div class="t" style="left:1260px;transform:translateX(-50%);top:437.85px;font-size:13px;line-height:13px;font-weight:400;-webkit-text-stroke:0.22px #2b2b2b;color:#2b2b2b;">6</div>
<div class="t" style="left:1307.8px;transform:translateX(-50%);top:437.85px;font-size:13px;line-height:13px;font-weight:400;-webkit-text-stroke:0.22px #2b2b2b;color:#2b2b2b;letter-spacing:0.719px;">A</div>
<div style="position:absolute;left:798.4px;top:467.5px;width:529.4px;height:38.3px;background:#ededed;border-radius:7px;"></div>
<div class="t" style="left:818.2px;transform:translateX(-50%);top:480.50px;font-size:13px;line-height:13px;font-weight:400;-webkit-text-stroke:0.45px #2b2b2b;color:#2b2b2b;">3</div>
<div class="t" style="left:846px;top:471.99px;font-size:11px;line-height:11px;font-weight:400;color:#979797;">SIF104</div>
<div class="t" style="left:846px;top:488.70px;font-size:13px;line-height:13px;font-weight:400;-webkit-text-stroke:0.45px #2b2b2b;color:#2b2b2b;letter-spacing:0.519px;">Logika Pemprograman</div>
<div class="t" style="left:1260px;transform:translateX(-50%);top:480.50px;font-size:13px;line-height:13px;font-weight:400;-webkit-text-stroke:0.22px #2b2b2b;color:#2b2b2b;">3</div>
<div class="t" style="left:1307.8px;transform:translateX(-50%);top:480.50px;font-size:13px;line-height:13px;font-weight:400;-webkit-text-stroke:0.22px #2b2b2b;color:#2b2b2b;letter-spacing:0.719px;">A</div>
<div style="position:absolute;left:798.4px;top:510.15px;width:529.4px;height:38.3px;background:#ededed;border-radius:7px;"></div>
<div class="t" style="left:818.2px;transform:translateX(-50%);top:523.15px;font-size:13px;line-height:13px;font-weight:400;-webkit-text-stroke:0.45px #2b2b2b;color:#2b2b2b;">4</div>
<div class="t" style="left:846px;top:514.64px;font-size:11px;line-height:11px;font-weight:400;color:#979797;">SIF101</div>
<div class="t" style="left:846px;top:531.35px;font-size:13px;line-height:13px;font-weight:400;-webkit-text-stroke:0.45px #2b2b2b;color:#2b2b2b;letter-spacing:0.434px;">Pemikiran Desain</div>
<div class="t" style="left:1260px;transform:translateX(-50%);top:523.15px;font-size:13px;line-height:13px;font-weight:400;-webkit-text-stroke:0.22px #2b2b2b;color:#2b2b2b;">4</div>
<div class="t" style="left:1307.8px;transform:translateX(-50%);top:523.15px;font-size:13px;line-height:13px;font-weight:400;-webkit-text-stroke:0.22px #2b2b2b;color:#2b2b2b;letter-spacing:0.719px;">A</div>
<div style="position:absolute;left:780px;top:593px;width:562px;height:503px;border:2px solid #cbcbcb;border-radius:14px;background:#ffffff;"></div>
<div class="t" style="left:798.75px;top:613.51px;font-size:18px;line-height:18px;font-weight:400;-webkit-text-stroke:0.45px #262626;color:#262626;letter-spacing:0.893px;">Perpustakaan</div>
<svg style="position:absolute;left:1310px;top:615px;" width="13" height="13" viewBox="0 0 13 13"><g fill="none" stroke="#7a7a7a" stroke-width="1.8"><path d="M7.9 0.9 H12.1 V5.1"/><path d="M0.9 7.2 V11.4 H5.9"/></g></svg>
<div style="position:absolute;left:798.5px;top:647.5px;width:525.0px;height:30.0px;border:2px solid #cfd0d2;border-radius:9px;background:#ededed;"></div>
<div style="position:absolute;left:801px;top:650.0px;width:261.5px;height:29.0px;border-radius:7px;background:#ffffff;"></div>
<div class="t" style="left:932.1px;transform:translateX(-50%);top:659.39px;font-size:11px;line-height:11px;font-weight:400;-webkit-text-stroke:0.25px #8a8a8a;color:#8a8a8a;letter-spacing:0.186px;">RIWAYAT PEMINJAMAN</div>
<div class="t" style="left:1193.2px;transform:translateX(-50%);top:659.39px;font-size:11px;line-height:11px;font-weight:400;-webkit-text-stroke:0.25px #8a8a8a;color:#8a8a8a;letter-spacing:-0.329px;">DENDA</div>
<div style="position:absolute;left:798.5px;top:697px;width:529px;height:36px;background:#ededed;border-radius:7px;"></div>
<div class="t" style="left:809.6px;top:709.40px;font-size:13px;line-height:13px;font-weight:400;color:#9a9a9a;letter-spacing:0.317px;">Ketik Judul Buku</div>
<svg style="position:absolute;left:1299.9px;top:705.4px;" width="17" height="17" viewBox="0 0 17 17"><g fill="none" stroke="#7d7d7d" stroke-width="1.7" stroke-linecap="round"><circle cx="6.8" cy="6.8" r="5.3"/><path d="M10.8 10.8 L16 16"/></g></svg>
<div class="t" style="left:808.5px;top:757.30px;font-size:13px;line-height:13px;font-weight:400;-webkit-text-stroke:0.45px #2b2b2b;color:#2b2b2b;letter-spacing:-0.117px;">No.</div>
<div class="t" style="left:846px;top:757.30px;font-size:13px;line-height:13px;font-weight:400;-webkit-text-stroke:0.45px #2b2b2b;color:#2b2b2b;letter-spacing:0.375px;">Judul Buku</div>
<div class="t" style="left:1167.8px;top:757.30px;font-size:13px;line-height:13px;font-weight:400;-webkit-text-stroke:0.45px #2b2b2b;color:#2b2b2b;letter-spacing:0.170px;">Pinjam</div>
<div class="t" style="left:1251.5px;top:757.30px;font-size:13px;line-height:13px;font-weight:400;-webkit-text-stroke:0.45px #2b2b2b;color:#2b2b2b;letter-spacing:0.255px;">Kembali</div>
<div style="position:absolute;left:798.5px;top:782px;width:529.2px;height:53.5px;background:#ededed;border-radius:7px;"></div>
<div class="t" style="left:818.5px;transform:translateX(-50%);top:802.95px;font-size:13px;line-height:13px;font-weight:400;-webkit-text-stroke:0.45px #2b2b2b;color:#2b2b2b;">1</div>
<div class="t" style="left:846.2px;top:786.44px;font-size:11px;line-height:11px;font-weight:400;color:#979797;letter-spacing:0.272px;">Yablonski, Jon</div>
<div class="t" style="left:846.2px;top:803.30px;font-size:13px;line-height:13px;font-weight:400;-webkit-text-stroke:0.45px #2b2b2b;color:#2b2b2b;letter-spacing:0.340px;">Laws of UX: Using Psychology to Design Better</div>
<div class="t" style="left:846.2px;top:817.80px;font-size:13px;line-height:13px;font-weight:400;-webkit-text-stroke:0.45px #2b2b2b;color:#2b2b2b;letter-spacing:0.382px;">Products &amp; Services</div>
<div class="t" style="left:1200px;transform:translateX(-50%);top:802.95px;font-size:13px;line-height:13px;font-weight:400;-webkit-text-stroke:0.3px #2b2b2b;color:#2b2b2b;letter-spacing:0.868px;">14/7/2024</div>
<div class="t" style="left:1284px;transform:translateX(-50%);top:802.95px;font-size:13px;line-height:13px;font-weight:400;-webkit-text-stroke:0.3px #2b2b2b;color:#2b2b2b;letter-spacing:0.868px;">19/7/2024</div>
<div style="position:absolute;left:798.5px;top:839.5px;width:529.2px;height:38.5px;background:#ededed;border-radius:7px;"></div>
<div class="t" style="left:818.5px;transform:translateX(-50%);top:852.95px;font-size:13px;line-height:13px;font-weight:400;-webkit-text-stroke:0.45px #2b2b2b;color:#2b2b2b;">1</div>
<div class="t" style="left:846.2px;top:843.94px;font-size:11px;line-height:11px;font-weight:400;color:#979797;letter-spacing:0.287px;">Krug, Steve</div>
<div class="t" style="left:846.2px;top:860.80px;font-size:13px;line-height:13px;font-weight:400;-webkit-text-stroke:0.45px #2b2b2b;color:#2b2b2b;letter-spacing:0.235px;">Don’t Make Me Think (Revisited)</div>
<div class="t" style="left:1200px;transform:translateX(-50%);top:852.95px;font-size:13px;line-height:13px;font-weight:400;-webkit-text-stroke:0.3px #2b2b2b;color:#2b2b2b;letter-spacing:0.868px;">7/7/2024</div>
<div class="t" style="left:1284px;transform:translateX(-50%);top:852.95px;font-size:13px;line-height:13px;font-weight:400;-webkit-text-stroke:0.3px #2b2b2b;color:#2b2b2b;letter-spacing:0.868px;">12/7/2024</div>
<div style="position:absolute;left:798.5px;top:882.0px;width:529.2px;height:38.5px;background:#ededed;border-radius:7px;"></div>
<div class="t" style="left:818.5px;transform:translateX(-50%);top:895.45px;font-size:13px;line-height:13px;font-weight:400;-webkit-text-stroke:0.45px #2b2b2b;color:#2b2b2b;">1</div>
<div class="t" style="left:846.2px;top:886.44px;font-size:11px;line-height:11px;font-weight:400;color:#979797;letter-spacing:0.327px;">Norman, Don</div>
<div class="t" style="left:846.2px;top:903.30px;font-size:13px;line-height:13px;font-weight:400;-webkit-text-stroke:0.45px #2b2b2b;color:#2b2b2b;letter-spacing:0.307px;">The Design of Everyday Things</div>
<div class="t" style="left:1200px;transform:translateX(-50%);top:895.45px;font-size:13px;line-height:13px;font-weight:400;-webkit-text-stroke:0.3px #2b2b2b;color:#2b2b2b;letter-spacing:0.868px;">29/6/2024</div>
<div class="t" style="left:1284px;transform:translateX(-50%);top:895.45px;font-size:13px;line-height:13px;font-weight:400;-webkit-text-stroke:0.3px #2b2b2b;color:#2b2b2b;letter-spacing:0.868px;">5/7/2024</div>
<div style="position:absolute;left:798.5px;top:924.5px;width:529.2px;height:38.5px;background:#ededed;border-radius:7px;"></div>
<div class="t" style="left:818.5px;transform:translateX(-50%);top:937.95px;font-size:13px;line-height:13px;font-weight:400;-webkit-text-stroke:0.45px #2b2b2b;color:#2b2b2b;">1</div>
<div class="t" style="left:846.2px;top:928.94px;font-size:11px;line-height:11px;font-weight:400;color:#979797;letter-spacing:0.299px;">Greever, Tom</div>
<div class="t" style="left:846.2px;top:945.80px;font-size:13px;line-height:13px;font-weight:400;-webkit-text-stroke:0.45px #2b2b2b;color:#2b2b2b;letter-spacing:0.434px;">Articulating Design Decisions</div>
<div class="t" style="left:1200px;transform:translateX(-50%);top:937.95px;font-size:13px;line-height:13px;font-weight:400;-webkit-text-stroke:0.3px #2b2b2b;color:#2b2b2b;letter-spacing:0.868px;">9/4/2024</div>
<div class="t" style="left:1284px;transform:translateX(-50%);top:937.95px;font-size:13px;line-height:13px;font-weight:400;-webkit-text-stroke:0.3px #2b2b2b;color:#2b2b2b;letter-spacing:0.868px;">19/4/2024</div>
<div style="position:absolute;left:798.5px;top:967.0px;width:529.2px;height:38.5px;background:#ededed;border-radius:7px;"></div>
<div class="t" style="left:818.5px;transform:translateX(-50%);top:980.45px;font-size:13px;line-height:13px;font-weight:400;-webkit-text-stroke:0.45px #2b2b2b;color:#2b2b2b;">1</div>
<div class="t" style="left:846.2px;top:971.44px;font-size:11px;line-height:11px;font-weight:400;color:#979797;letter-spacing:0.272px;">Heller &amp; Vienne</div>
<div class="t" style="left:846.2px;top:988.30px;font-size:13px;line-height:13px;font-weight:400;-webkit-text-stroke:0.45px #2b2b2b;color:#2b2b2b;letter-spacing:0.207px;">100 Ideas That Changed Graphic Design</div>
<div class="t" style="left:1200px;transform:translateX(-50%);top:980.45px;font-size:13px;line-height:13px;font-weight:400;-webkit-text-stroke:0.3px #2b2b2b;color:#2b2b2b;letter-spacing:0.868px;">12/2/2024</div>
<div class="t" style="left:1284px;transform:translateX(-50%);top:980.45px;font-size:13px;line-height:13px;font-weight:400;-webkit-text-stroke:0.3px #2b2b2b;color:#2b2b2b;letter-spacing:0.868px;">12/2/2024</div>
</div></div>
</body></html>
